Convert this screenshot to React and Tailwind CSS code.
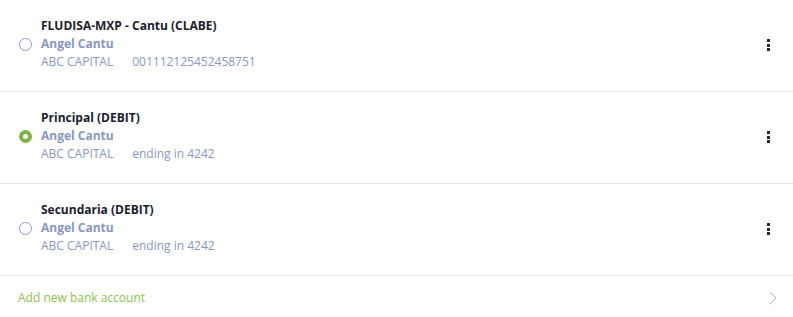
import { ChevronRight } from 'lucide-react';

const ACCOUNTS = [
  { id: 1, title: 'FLUDISA-MXP - Cantu (CLABE)', owner: 'Angel Cantu', bank: 'ABC CAPITAL', detail: '001112125452458751', selected: false },
  { id: 2, title: 'Principal (DEBIT)', owner: 'Angel Cantu', bank: 'ABC CAPITAL', detail: 'ending in 4242', selected: true },
  { id: 3, title: 'Secundaria (DEBIT)', owner: 'Angel Cantu', bank: 'ABC CAPITAL', detail: 'ending in 4242', selected: false },
];

function Radio({ checked }) {
  return checked ? (
    <span className="w-[13px] h-[13px] rounded-full border-[4px] border-[#7cb342] bg-white shrink-0" />
  ) : (
    <span className="w-[13px] h-[13px] rounded-full border border-[#8d9cc4] bg-white shrink-0" />
  );
}

function Kebab() {
  return (
    <button className="flex flex-col gap-[1.5px] mt-[23px] px-0.5">
      <span className="w-[3px] h-[3px] bg-[#1f2937]" />
      <span className="w-[3px] h-[3px] bg-[#1f2937]" />
      <span className="w-[3px] h-[3px] bg-[#1f2937]" />
    </button>
  );
}

export default function App() {
  return (
    <div className="w-[793px] h-[317px] bg-white font-['Open_Sans',sans-serif] text-[12px]">
      {ACCOUNTS.map((acc) => (
        <div key={acc.id} className="flex items-start h-[92px] pl-[19px] pr-[21px] pt-[16px] border-b border-[#dde2ee]">
          <div className="mt-[22px] flex">
            <Radio checked={acc.selected} />
          </div>
          <div className="flex-1 ml-[9px]">
            <p className="leading-[19px] font-bold text-[#1b1d2e]">{acc.title}</p>
            <p className="leading-[18px] font-bold text-[#8797c4]">{acc.owner}</p>
            <p className="leading-[17px] text-[#8797c4]">
              <span className="mr-[19px]">{acc.bank}</span>
              <span>{acc.detail}</span>
            </p>
          </div>
          <Kebab />
        </div>
      ))}
      <button className="w-full h-[41px] flex items-center justify-between pl-[18px] pr-[8px] pt-[2px] text-[#8bc34a]">
        <span>Add new bank account</span>
        <ChevronRight size={24} strokeWidth={1} className="text-[#a9bcd3]" />
      </button>
    </div>
  );
}
